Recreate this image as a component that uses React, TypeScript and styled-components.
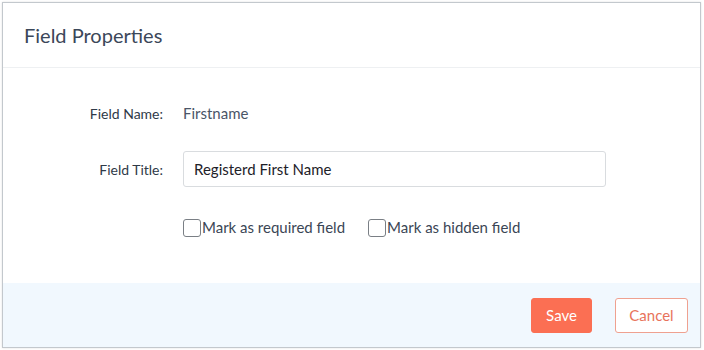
import styled, { createGlobalStyle } from 'styled-components';

const GlobalStyle = createGlobalStyle`
  html, body {
    margin: 0;
    padding: 0;
    background: #fff;
    font-family: Lato, 'Open Sans', sans-serif;
  }
`;

const Page = styled.div`
  padding: 2px 3px 2px 2px;
`;

const Modal = styled.div`
  border: 1px solid #c3c8cd;
  box-shadow: 0 0 2px rgba(0, 0, 0, 0.12);
  background: #fff;
  height: 344px;
  display: flex;
  flex-direction: column;
`;

const Header = styled.div`
  height: 64px;
  border-bottom: 1px solid #eef0f2;
  display: flex;
  align-items: center;
  padding: 0 21px;
`;

const Title = styled.h2`
  margin: 0;
  font-size: 20px;
  font-weight: 400;
  color: #3b4759;
`;

const Body = styled.div`
  flex: 1;
  padding-top: 27px;
  display: grid;
  grid-template-columns: 160px 423px;
  column-gap: 20px;
  grid-auto-rows: 36px;
  row-gap: 20px;
  align-content: start;
`;

const Label = styled.label`
  display: flex;
  align-items: center;
  justify-content: flex-end;
  font-size: 14px;
  color: #2f3a48;
`;

const Value = styled.div`
  display: flex;
  align-items: center;
  font-size: 15px;
  color: #4a5567;
`;

const Input = styled.input`
  box-sizing: border-box;
  width: 100%;
  height: 36px;
  border: 1px solid #d9dcdf;
  border-radius: 3px;
  padding: 0 10px;
  font-family: Lato, 'Open Sans', sans-serif;
  font-size: 15px;
  color: #1d2128;
  outline: none;
`;

const Options = styled.div`
  grid-column: 2;
  display: flex;
  align-items: center;
  gap: 23px;
  margin-top: 3px;
`;

const Check = styled.label`
  display: flex;
  align-items: center;
  font-size: 15px;
  color: #3b4655;
  cursor: pointer;
`;

const Box = styled.span`
  box-sizing: border-box;
  width: 18px;
  height: 18px;
  border: 1.5px solid #7a7f85;
  border-radius: 3px;
  margin-right: 1px;
  margin-top: 2px;
`;

const Footer = styled.div`
  height: 64px;
  background: #f1f8fe;
  display: flex;
  align-items: center;
  justify-content: flex-end;
  gap: 23px;
  padding-right: 12px;
`;

const Button = styled.button<{ $primary?: boolean }>`
  box-sizing: border-box;
  height: 35px;
  width: ${(p) => (p.$primary ? '61px' : '73px')};
  padding: 0;
  border-radius: 3px;
  font-family: Lato, 'Open Sans', sans-serif;
  font-size: 15px;
  cursor: pointer;
  border: 1px solid ${(p) => (p.$primary ? '#fb6f53' : '#efa190')};
  background: ${(p) => (p.$primary ? '#fb6f53' : '#fff')};
  color: ${(p) => (p.$primary ? '#fff' : '#e8735b')};
`;

export default function App() {
  return (
    <>
      <GlobalStyle />
      <Page>
        <Modal>
          <Header>
            <Title>Field Properties</Title>
          </Header>
          <Body>
            <Label>Field Name:</Label>
            <Value>Firstname</Value>
            <Label>Field Title:</Label>
            <Input defaultValue="Registerd First Name" />
            <Options>
              <Check>
                <Box />
                Mark as required field
              </Check>
              <Check>
                <Box />
                Mark as hidden field
              </Check>
            </Options>
          </Body>
          <Footer>
            <Button $primary>Save</Button>
            <Button>Cancel</Button>
          </Footer>
        </Modal>
      </Page>
    </>
  );
}
